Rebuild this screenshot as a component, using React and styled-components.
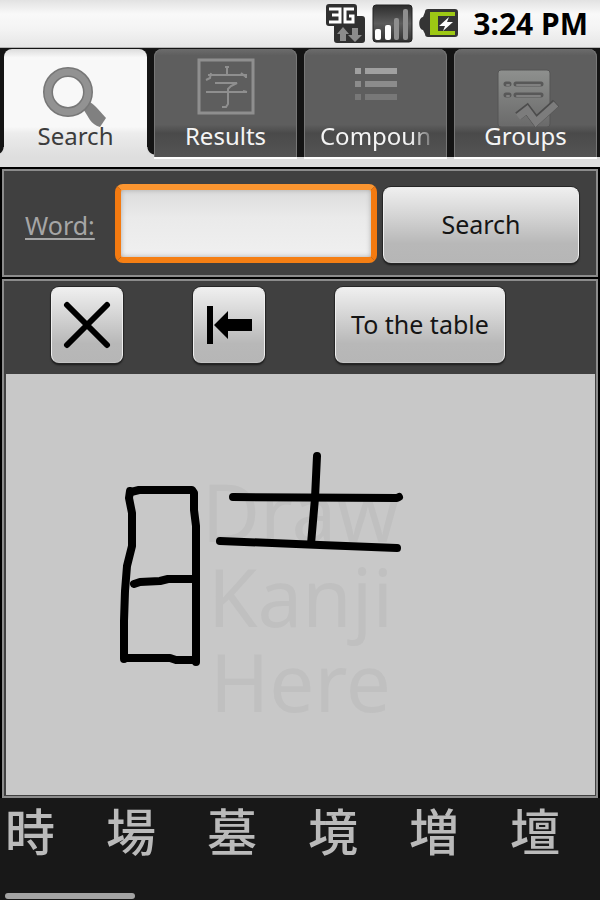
import React, { Component } from 'react';
import styled, { createGlobalStyle } from 'styled-components'

const GlobalStyle = createGlobalStyle`
  * {
    box-sizing: border-box;
  }
  body {
    margin: 0;
    background: #000;
    font-family: "Noto Sans", "Noto Sans CJK JP", sans-serif;
  }
`

const UI = {
  Screen: styled.div`
    display: flex;
    flex-direction: column;
    min-height: 100vh;
    background: #000;
  `,
  StatusBar: styled.header`
    display: flex;
    align-items: center;
    justify-content: flex-end;
    gap: 6px;
    height: 48px;
    padding: 0 12px 0 0;
    background: linear-gradient(#e2e2e2, #f9f9f9 30%, #f4f4f4 60%, #e6e6e6);
    border-bottom: 1px solid #b4b4b4;
  `,
  Clock: styled.time`
    margin-left: 8px;
    font-size: 30px;
    line-height: 36px;
    font-weight: bold;
    color: #000;
  `,
  Tabs: styled.nav`
    display: grid;
    grid-template-columns: repeat(4, 1fr);
    background: #141414;
    border-bottom: 10px solid #dedede;
  `,
  Tab: styled.button`
    position: relative;
    display: grid;
    justify-items: center;
    height: 108px;
    margin: 1px 3px 0 4px;
    padding: 6px 0 2px;
    border: 0;
    border-radius: 8px 8px 0 0;
    font-family: inherit;
    font-size: 24px;
    line-height: 38px;
    cursor: pointer;
    color: ${props => props.$active ? '#3c3c3c' : '#f4f4f4'};
    background: ${props => props.$active
      ? 'linear-gradient(#dcdcdc, #f8f8f8 8%, #f8f8f8 72%, #ececec 78%, #dedede)'
      : 'linear-gradient(#6c6c6c, #5e5e5e 6%, #5e5e5e 70%, #4a4a4a 78%, #545454)'};
    box-shadow: ${props => props.$active ? 'none' : 'inset 1px 0 #777, inset -1px 0 #777, 0 2px #fff'};

    &::before,
    &::after {
      content: ${props => props.$active ? '""' : 'none'};
      position: absolute;
      bottom: 0;
      width: 8px;
      height: 10px;
    }
    &::before {
      right: 100%;
      background: radial-gradient(circle at 0 0, transparent 7px, #dedede 8px);
    }
    &::after {
      left: 100%;
      background: radial-gradient(circle at 100% 0, transparent 7px, #dedede 8px);
    }
  `,
  // the label sits on top of the lower part of the icon
  TabIcon: styled.svg`
    grid-area: 1 / 1;
    width: 72px;
    height: 72px;
  `,
  TabLabel: styled.span`
    grid-area: 1 / 1;
    align-self: end;
    z-index: 1;
    white-space: nowrap;
    mask-image: ${props => props.$faded
      ? 'linear-gradient(to right, #000 82%, transparent 106%)'
      : 'none'};
  `,
  Panel: styled.section`
    margin: 2px 2px 0;
    border: 2px solid #8c8c8c;
    background: #404040;
  `,
  SearchForm: styled.form`
    display: grid;
    grid-template-columns: 90px 262fr 202fr;
    align-items: end;
    height: 104px;
    padding: 0 17px 12px 21px;
  `,
  Label: styled.label`
    font-size: 25px;
    line-height: 76px;
    color: #a6a6a6;
    text-decoration: underline;
    text-decoration-thickness: 2px;
    text-underline-offset: 3px;
  `,
  Input: styled.input`
    min-width: 0;
    height: 79px;
    padding: 0 12px;
    border: 6px solid #f47a10;
    border-color: #fb9530 #f47a10 #f57f14;
    border-radius: 8px;
    outline: 0;
    font-family: inherit;
    font-size: 25px;
    background: linear-gradient(#dcdcdc, #eaeaea 40%, #f0f0f0);
    box-shadow: inset 0 0 5px #aaa;
  `,
  Button: styled.button`
    display: flex;
    align-items: center;
    justify-content: center;
    height: 76px;
    padding: 0 15px 2px;
    border: 1px solid #eee;
    border-bottom-color: #c4c4c4;
    border-radius: 8px;
    font-family: inherit;
    font-size: 25px;
    line-height: 34px;
    white-space: nowrap;
    color: #151515;
    cursor: pointer;
    background: linear-gradient(#efefef, #d6d6d6 35%, #b8b8b8 75%, #b6b6b6);
    box-shadow: 0 0 0 1px #262626, 0 2px 2px #1a1a1a;
  `,
  Toolbar: styled.div`
    display: flex;
    gap: 70px;
    height: 93px;
    padding: 6px 0 0 47px;
  `,
  Canvas: styled.div`
    position: relative;
    flex: 1;
    min-height: 420px;
    margin: 0 1px 1px 2px;
    padding-top: 94px;
    background: #c8c8c8;
  `,
  Hint: styled.p`
    width: min-content;
    margin: 0 auto;
    font-size: 80px;
    line-height: 85px;
    text-align: center;
    color: #c0c0c0;
  `,
  Strokes: styled.svg`
    position: absolute;
    top: 0;
    left: 0;
    fill: none;
    stroke: #000;
    stroke-width: 8;
    stroke-linecap: round;
    stroke-linejoin: round;
  `,
  Candidates: styled.footer`
    height: 102px;
    padding: 1px 5px 0;
    background: #181818;
  `,
  CandidateList: styled.div`
    display: flex;
    gap: 51px;
    height: 94px;
  `,
  Candidate: styled.button`
    flex: none;
    height: 60px;
    padding: 0;
    border: 0;
    font-family: "Noto Sans CJK JP", sans-serif;
    font-size: 50px;
    font-weight: 500;
    line-height: 60px;
    color: #bababa;
    background: none;
    cursor: pointer;
  `,
  ScrollThumb: styled.div`
    width: 22%;
    height: 6px;
    border-radius: 3px;
    background: #a4a4a4;
  `
}

UI.DrawPanel = styled(UI.Panel)`
  flex: 1;
  display: flex;
  flex-direction: column;
`

UI.SearchButton = styled(UI.Button)`
  margin-left: 6px;
`

UI.IconButton = styled(UI.Button)`
  width: 72px;
  padding: 0;
`

const NetworkIcon = () => (
  <svg width="40" height="40" viewBox="0 0 40 40">
    <path d="M3 0h25a3 3 0 0 1 3 3v9h5a3 3 0 0 1 3 3v21a3 3 0 0 1-3 3H11a3 3 0 0 1-3-3V22H3a3 3 0 0 1-3-3V3a3 3 0 0 1 3-3z" fill="#303030" />
    <path d="M3 5h11v13H3M6 11h8" fill="none" stroke="#fff" strokeWidth="3" />
    <path d="M28 5h-9v13h8v-6h-4" fill="none" stroke="#fff" strokeWidth="3" />
    <path d="M17 23l6 7h-3v7h-6v-7h-3z" fill="#8c8c8c" />
    <path d="M26 24h6v7h4l-7 7-7-7h4z" fill="#8c8c8c" />
  </svg>
)

const SignalIcon = () => (
  <svg width="41" height="40" viewBox="0 0 41 40">
    <defs>
      <linearGradient id="signal" x1="0" y1="0" x2="0" y2="1">
        <stop offset="0" stopColor="#2c2c2c" />
        <stop offset="0.5" stopColor="#5c5c5c" />
        <stop offset="1" stopColor="#303030" />
      </linearGradient>
    </defs>
    <rect x="1" y="1" width="39" height="37" rx="3" fill="url(#signal)" stroke="#222" />
    <rect x="3" y="25" width="6" height="11" rx="2" fill="#fff" />
    <rect x="13" y="21" width="6" height="15" rx="2" fill="#fff" />
    <rect x="22" y="14" width="5" height="22" rx="2" fill="#8e8e8e" />
    <rect x="31" y="5" width="5" height="31" rx="2" fill="#8e8e8e" />
  </svg>
)

const BatteryIcon = () => (
  <svg width="40" height="40" viewBox="0 0 40 40">
    <path d="M9 5h27a3 3 0 0 1 3 3v22a3 3 0 0 1-3 3H9a3 3 0 0 1-3-3l-2-4c-5-1-5-12 0-13l2-5a3 3 0 0 1 3-3z" fill="#343434" />
    <path d="M11 8h25v4H19v15h17v4H11z" fill="#9dc814" />
    <path d="M30 13l-10 9h6l-2 5 10-9h-6z" fill="#fff" />
  </svg>
)

const SearchIcon = () => (
  <UI.TabIcon viewBox="0 0 72 72">
    <path d="M42 52l5-6c4 1 7 4 10 7l9 10-6 9c-4-1-8-4-10-7z" fill="#808080" />
    <circle cx="28" cy="37" r="20" fill="none" stroke="#777" strokeWidth="10" />
    <circle cx="28" cy="37" r="20" fill="none" stroke="#929292" strokeWidth="7" />
  </UI.TabIcon>
)

const ResultsIcon = () => (
  <UI.TabIcon viewBox="0 0 72 72" fill="none" stroke="#8f8f8f" strokeWidth="2">
    <rect x="9" y="5" width="54" height="53" strokeWidth="3" />
    <path d="M37 12v8M35 12h4M18 20h37M21 18l-1 5-4 2M51 18l5 4M56 19v4M25 28h22l-6 3-3 3v15l-2 3h-4M16 37h41M53 36l4 1" />
  </UI.TabIcon>
)

const CompoundsIcon = () => (
  <UI.TabIcon viewBox="0 0 72 72">
    <path d="M15 13h6v6h-6zM25 13h32v6H25z" fill="#a0a0a0" />
    <path d="M15 26h6v6h-6zM25 26h32v6H25z" fill="#8c8c8c" />
    <path d="M15 39h6v6h-6zM25 39h32v6H25z" fill="#787878" />
  </UI.TabIcon>
)

const GroupsIcon = () => (
  <UI.TabIcon viewBox="0 0 72 72" fill="none">
    <defs>
      <linearGradient id="sheet" x1="0" y1="0" x2="0" y2="1">
        <stop offset="0" stopColor="#8e908e" />
        <stop offset="1" stopColor="#6a6a6a" />
      </linearGradient>
    </defs>
    <rect x="8" y="15" width="52" height="57" rx="3" fill="url(#sheet)" stroke="#555" />
    <path d="M16 29h3M26 29h25M16 40h3M26 40h25" stroke="#585858" strokeWidth="5" strokeLinecap="round" />
    <path d="M17 30h2M27 30h23M17 41h2M27 41h23" stroke="#808080" strokeWidth="2" strokeLinecap="round" />
    <path d="M28 61l9-7 9 12 20-18" stroke="#4c4c4c" strokeWidth="9" />
    <path d="M28 62l9-7 9 12 20-18" stroke="#7c7c7c" strokeWidth="7" />
  </UI.TabIcon>
)

const tabs = [
  { name: 'Search', Icon: SearchIcon },
  { name: 'Results', Icon: ResultsIcon },
  { name: 'Compoun', Icon: CompoundsIcon, faded: true },
  { name: 'Groups', Icon: GroupsIcon },
]

const strokes = [
  'M124 117l-1 7 3 15v33l-5 20-2 25-1 30v38',
  'M125 118l8-2h53l2 3v17l2 16v136',
  'M128 210l6-2 20-1 8-2h28',
  'M120 284h44l6 2h20',
  'M227 123l164 1 2-1',
  'M311 82l-2 42-4 46',
  'M214 167l100 4 77 3',
]

const candidates = ['時', '場', '墓', '境', '増', '壇']

class App extends Component {
  constructor() {
    super()
    this.state = {
      tab: 'Search',
      word: '',
      strokes,
    }
  }

  clear() {
    this.setState({ strokes: [] })
  }

  undo() {
    this.setState({ strokes: this.state.strokes.slice(0, -1) })
  }

  addCharacter(character) {
    this.setState({ word: this.state.word + character })
  }

  render() {
    const { tab, word } = this.state

    return (
      <UI.Screen>
        <GlobalStyle />
        <UI.StatusBar>
          <NetworkIcon />
          <SignalIcon />
          <BatteryIcon />
          <UI.Clock>3:24 PM</UI.Clock>
        </UI.StatusBar>
        <UI.Tabs>
          {tabs.map(({ name, Icon, faded }) => (
            <UI.Tab key={name} type="button" $active={name === tab} onClick={() => this.setState({tab: name})}>
              <Icon />
              <UI.TabLabel $faded={faded}>{name}</UI.TabLabel>
            </UI.Tab>
          ))}
        </UI.Tabs>
        <UI.Panel>
          <UI.SearchForm onSubmit={event => event.preventDefault()}>
            <UI.Label htmlFor="word">Word:</UI.Label>
            <UI.Input id="word" value={word} onChange={event => this.setState({word: event.target.value})} />
            <UI.SearchButton type="submit">Search</UI.SearchButton>
          </UI.SearchForm>
        </UI.Panel>
        <UI.DrawPanel>
          <UI.Toolbar>
            <UI.IconButton type="button" aria-label="Clear" onClick={() => this.clear()}>
              <svg width="48" height="48" viewBox="0 0 48 48" stroke="#000" strokeWidth="6" strokeLinecap="round">
                <path d="M4 4l40 40M44 4L4 44" />
              </svg>
            </UI.IconButton>
            <UI.IconButton type="button" aria-label="Undo" onClick={() => this.undo()}>
              <svg width="48" height="48" viewBox="0 0 48 48">
                <path d="M2 5h6v38H2zM9 24l14-14v8h24v12H23v8z" />
              </svg>
            </UI.IconButton>
            <UI.Button type="button">To the table</UI.Button>
          </UI.Toolbar>
          <UI.Canvas>
            <UI.Hint>Draw Kanji Here</UI.Hint>
            <UI.Strokes width="590" height="420" viewBox="0 0 590 420">
              {this.state.strokes.map(d => <path key={d} d={d} />)}
            </UI.Strokes>
          </UI.Canvas>
        </UI.DrawPanel>
        <UI.Candidates>
          <UI.CandidateList>
            {candidates.map(character => (
              <UI.Candidate key={character} type="button" onClick={() => this.addCharacter(character)}>
                {character}
              </UI.Candidate>
            ))}
          </UI.CandidateList>
          <UI.ScrollThumb />
        </UI.Candidates>
      </UI.Screen>
    );
  }
}

export default App;
